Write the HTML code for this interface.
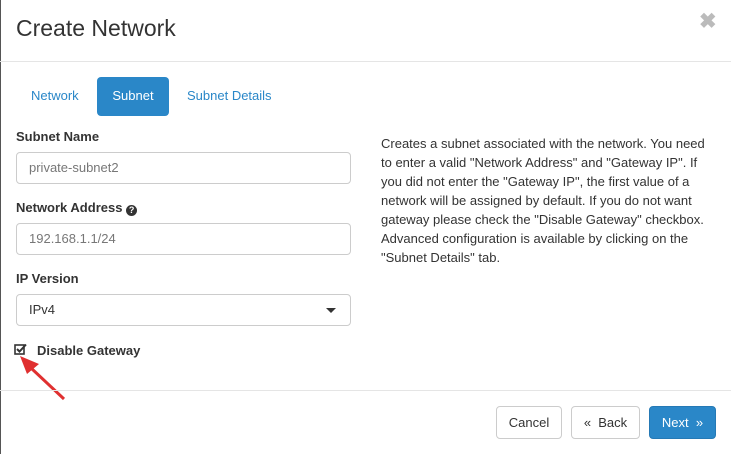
<!DOCTYPE html>
<html><head><style>
*{box-sizing:border-box;margin:0;padding:0}
body{width:731px;height:454px;background:#fff;font-family:"Liberation Sans",sans-serif;color:#333;position:relative;overflow:hidden}
.lb{position:absolute;left:0;top:0;width:1px;height:454px;background:#555}
.abs{position:absolute}
h1{position:absolute;left:16px;top:15px;font-size:23px;font-weight:normal;color:#333}
.x{position:absolute;left:699px;top:9px;font-size:21px;font-weight:bold;color:#bbb}
.hr{position:absolute;left:0;width:731px;height:1px;background:#e5e5e5}
.tab{position:absolute;top:77px;height:39px;line-height:37px;font-size:13px;color:#2a87c8;padding:0 15px}
.act{background:#2a87c8;color:#fff;border-radius:4px}
label{position:absolute;left:16px;font-size:13px;font-weight:bold;color:#333}
.in{position:absolute;left:16px;width:335px;height:32px;border:1px solid #ccc;border-radius:4px;font-size:13px;color:#777;padding-left:12px;line-height:30px}
.desc{position:absolute;left:381px;top:134px;width:335px;font-size:13px;line-height:19px;color:#333}
.btn{position:absolute;top:406px;height:33px;line-height:31px;font-size:13px;border:1px solid #ccc;border-radius:4px;text-align:center;color:#333}
</style></head><body>
<div class="lb"></div>
<h1>Create Network</h1>
<div class="x">✖</div>
<div class="hr" style="top:61px"></div>
<div class="tab" style="left:16px">Network</div>
<div class="tab act" style="left:97px;width:72px;text-align:center;padding:0">Subnet</div>
<div class="tab" style="left:172px">Subnet Details</div>
<label style="top:129px">Subnet Name</label>
<div class="in" style="top:152px">private-subnet2</div>
<label style="top:200px">Network Address <span style="display:inline-block;width:11px;height:11px;border-radius:50%;background:#333;color:#fff;font-size:9px;line-height:11px;text-align:center;vertical-align:-1px">?</span></label>
<div class="in" style="top:223px">192.168.1.1/24</div>
<label style="top:271px">IP Version</label>
<div class="in" style="top:294px;color:#333">IPv4<span style="position:absolute;right:14px;top:13px;border-left:5px solid transparent;border-right:5px solid transparent;border-top:5px solid #333"></span></div>
<svg class="abs" style="left:14px;top:343px" width="14" height="13" viewBox="0 0 14 13"><rect x="1" y="2" width="9" height="9" fill="none" stroke="#333" stroke-width="1.6"/><path d="M3 6l2.5 2.5L12 1.5" fill="none" stroke="#333" stroke-width="2"/></svg>
<label style="left:37px;top:343px">Disable Gateway</label>
<svg class="abs" style="left:17px;top:354px" width="52" height="48" viewBox="0 0 52 48"><path d="M47 45L14 14" stroke="#e03030" stroke-width="3"/><path d="M3 2L22 10 10 20Z" fill="#e03030"/></svg>
<div class="desc">Creates a subnet associated with the network. You need to enter a valid "Network Address" and "Gateway IP". If you did not enter the "Gateway IP", the first value of a network will be assigned by default. If you do not want gateway please check the "Disable Gateway" checkbox. Advanced configuration is available by clicking on the "Subnet Details" tab.</div>
<div class="hr" style="top:390px"></div>
<div class="btn" style="left:496px;width:66px">Cancel</div>
<div class="btn" style="left:571px;width:69px">«&nbsp; Back</div>
<div class="btn" style="left:649px;width:67px;background:#2a87c8;border-color:#2579b5;color:#fff">Next&nbsp; »</div>
</body></html>
